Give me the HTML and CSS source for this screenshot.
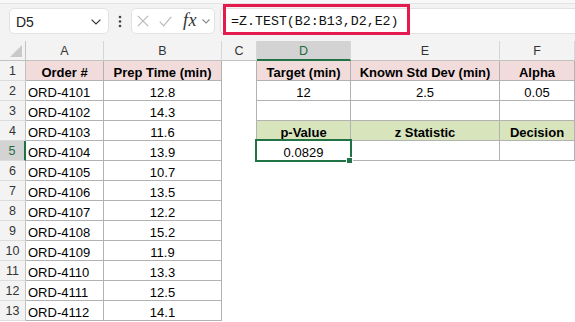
FILE: index.html
```html
<!DOCTYPE html>
<html>
<head>
<meta charset="utf-8">
<link rel="stylesheet" href="styles.css">
</head>
<body>
<div class="app">
  <div class="toolbar">
    <div class="namebox">
      <span class="nb-text">D5</span>
      <svg class="nb-chev" width="10" height="6" viewBox="0 0 10 6"><path d="M0.6 0.6 L5 5 L9.4 0.6" stroke="#333" stroke-width="1.2" fill="none"/></svg>
    </div>
    <div class="dots">
      <svg width="4" height="13" viewBox="0 0 4 13"><circle cx="2" cy="2" r="1.3" fill="#444"/><circle cx="2" cy="6.5" r="1.3" fill="#444"/><circle cx="2" cy="11" r="1.3" fill="#444"/></svg>
    </div>
    <div class="fxbox">
      <svg class="ic-x" width="12" height="12" viewBox="0 0 12 12"><path d="M0.8 0.8 L11.2 11.2 M11.2 0.8 L0.8 11.2" stroke="#b9b9b9" stroke-width="1.2" fill="none"/></svg>
      <svg class="ic-ok" width="13" height="11" viewBox="0 0 13 11"><path d="M0.8 5.6 L4.6 9.8 L12.2 0.8" stroke="#b9b9b9" stroke-width="1.2" fill="none"/></svg>
      <span class="fx">fx</span>
      <svg class="ic-chev" width="8" height="5" viewBox="0 0 8 5"><path d="M0.5 0.5 L4 4 L7.5 0.5" stroke="#8a8a8a" stroke-width="1.1" fill="none"/></svg>
    </div>
    <div class="formula">
      <span class="ftext">=Z.TEST(B2:B13,D2,E2)</span>
      <div class="highlight"></div>
    </div>
  </div>

  <div class="sheet">
    <div class="ch corner"><svg width="12" height="12" viewBox="0 0 12 12"><path d="M12 0 L12 12 L0 12 Z" fill="#c9c9c9"/></svg></div>
    <div class="ch">A</div>
    <div class="ch">B</div>
    <div class="ch">C</div>
    <div class="ch sel">D</div>
    <div class="ch">E</div>
    <div class="ch">F</div>

    <div class="rh">1</div>
    <div class="t pk">Order #</div>
    <div class="t pk">Prep Time (min)</div>
    <div class="cb"></div>
    <div class="t pk">Target (min)</div>
    <div class="t pk">Known Std Dev (min)</div>
    <div class="t pk">Alpha</div>

    <div class="rh">2</div>
    <div class="t l">ORD-4101</div>
    <div class="t">12.8</div>
    <div class="cb"></div>
    <div class="t">12</div>
    <div class="t">2.5</div>
    <div class="t">0.05</div>

    <div class="rh">3</div>
    <div class="t l">ORD-4102</div>
    <div class="t">14.3</div>
    <div class="cb"></div>
    <div class="t"></div>
    <div class="t"></div>
    <div class="t"></div>

    <div class="rh">4</div>
    <div class="t l">ORD-4103</div>
    <div class="t">11.6</div>
    <div class="cb"></div>
    <div class="t gr">p-Value</div>
    <div class="t gr">z Statistic</div>
    <div class="t gr">Decision</div>

    <div class="rh sel">5</div>
    <div class="t l">ORD-4104</div>
    <div class="t">13.9</div>
    <div class="cb"></div>
    <div class="t">0.0829</div>
    <div class="t"></div>
    <div class="t"></div>

    <div class="rh">6</div>
    <div class="t l">ORD-4105</div>
    <div class="t">10.7</div>
    <div class="e"></div><div class="e"></div><div class="e"></div><div class="e"></div>

    <div class="rh">7</div>
    <div class="t l">ORD-4106</div>
    <div class="t">13.5</div>
    <div class="e"></div><div class="e"></div><div class="e"></div><div class="e"></div>

    <div class="rh">8</div>
    <div class="t l">ORD-4107</div>
    <div class="t">12.2</div>
    <div class="e"></div><div class="e"></div><div class="e"></div><div class="e"></div>

    <div class="rh">9</div>
    <div class="t l">ORD-4108</div>
    <div class="t">15.2</div>
    <div class="e"></div><div class="e"></div><div class="e"></div><div class="e"></div>

    <div class="rh">10</div>
    <div class="t l">ORD-4109</div>
    <div class="t">11.9</div>
    <div class="e"></div><div class="e"></div><div class="e"></div><div class="e"></div>

    <div class="rh">11</div>
    <div class="t l">ORD-4110</div>
    <div class="t">13.3</div>
    <div class="e"></div><div class="e"></div><div class="e"></div><div class="e"></div>

    <div class="rh">12</div>
    <div class="t l">ORD-4111</div>
    <div class="t">12.5</div>
    <div class="e"></div><div class="e"></div><div class="e"></div><div class="e"></div>

    <div class="rh">13</div>
    <div class="t l">ORD-4112</div>
    <div class="t">14.1</div>
    <div class="e"></div><div class="e"></div><div class="e"></div><div class="e"></div>

    <div class="selection"></div>
    <div class="handle"></div>
  </div>
</div>
</body>
</html>
```

FILE: styles.css
```css
* { box-sizing: border-box; }
html, body { margin: 0; padding: 0; background: #fff; }
body { font-family: "Liberation Sans", Arial, sans-serif; width: 575px; height: 322px; overflow: hidden; }

.toolbar {
  height: 41px;
  background: #f3f3f3;
  border-top: 3px solid #f8f8f8;
  display: flex;
  align-items: flex-start;
  padding: 5px 0 0 9px;
  box-shadow: inset 0 1px 0 #e4e4e4;
}
.namebox {
  width: 100px;
  height: 26px;
  background: #fff;
  border: 1px solid #e2e2e2;
  border-radius: 5px;
  display: flex;
  align-items: center;
  justify-content: space-between;
  padding: 0 7px 0 6px;
}
.nb-text { font-size: 14px; color: #222; margin-top: 1px; }
.nb-chev { margin-top: 1px; }
.dots {
  width: 22px;
  height: 26px;
  display: flex;
  align-items: center;
  justify-content: center;
  padding-top: 1px;
}
.fxbox {
  width: 84px;
  height: 26px;
  background: #fff;
  border: 1px solid #e2e2e2;
  border-radius: 5px;
  display: flex;
  align-items: center;
  padding-left: 5px;
}
.ic-x { margin-right: 10px; }
.ic-ok { margin-right: 11px; }
.fx {
  font-family: "Liberation Serif", serif;
  font-style: italic;
  font-size: 18px;
  color: #333;
  margin-right: 5px;
  margin-top: -2px;
  letter-spacing: 0.5px;
}
.formula {
  position: relative;
  flex: 1;
  height: 26px;
  margin-left: 5px;
  background: #fff;
  border: 1px solid #e2e2e2;
  border-right: none;
  border-radius: 4px 0 0 4px;
  padding-left: 10px;
  display: flex;
  align-items: center;
}
.ftext {
  font-family: "Liberation Mono", "Courier New", monospace;
  font-size: 13.3px;
  color: #111;
  margin-top: 1px;
}
.highlight {
  position: absolute;
  left: 2px;
  top: -5px;
  width: 187px;
  height: 31px;
  border: 3px solid #e31b4f;
}

.sheet {
  position: relative;
  display: grid;
  grid-template-columns: 26px 78px 118px 35px 94px 149px 75px;
  grid-auto-rows: 20px;
}
.ch {
  background: #f3f3f3;
  border-right: 1px solid #d6d6d6;
  border-bottom: 1px solid #c2c2c2;
  font-size: 12.5px;
  color: #333;
  display: flex;
  align-items: center;
  justify-content: center;
  padding-top: 1px;
}
.ch.corner { align-items: flex-end; justify-content: flex-end; padding: 0 3px 3px 0; border-right-color: #c2c2c2; }
.ch.sel {
  background: #d3d3d3;
  color: #1d6b3e;
  border-bottom: 2px solid #217346;
}
.rh {
  background: #f3f3f3;
  border-right: 1px solid #c2c2c2;
  border-bottom: 1px solid #dcdcdc;
  font-size: 12.5px;
  color: #333;
  display: flex;
  align-items: center;
  justify-content: center;
  padding-top: 1px;
}
.rh.sel {
  background: #d3d3d3;
  color: #1d6b3e;
  border-right: 2px solid #217346;
}
.t {
  border-right: 1px solid #b2b2b2;
  border-bottom: 1px solid #b2b2b2;
  font-size: 13px;
  line-height: 15px;
  padding-top: 4px;
  text-align: center;
  color: #000;
  white-space: nowrap;
  overflow: visible;
}
.t.l { text-align: left; padding-left: 2px; }
.t.pk { background: #f2dcdb; font-weight: bold; }
.t.gr { background: #d8e4bc; font-weight: bold; }
.cb { border-right: 1px solid #b2b2b2; }
.e { }

.selection {
  position: absolute;
  left: 255px;
  top: 98px;
  width: 97px;
  height: 23px;
  border: 2px solid #217346;
  pointer-events: none;
}
.handle {
  position: absolute;
  left: 346px;
  top: 116px;
  width: 7px;
  height: 7px;
  background: #217346;
  border: 1px solid #fff;
}
```
